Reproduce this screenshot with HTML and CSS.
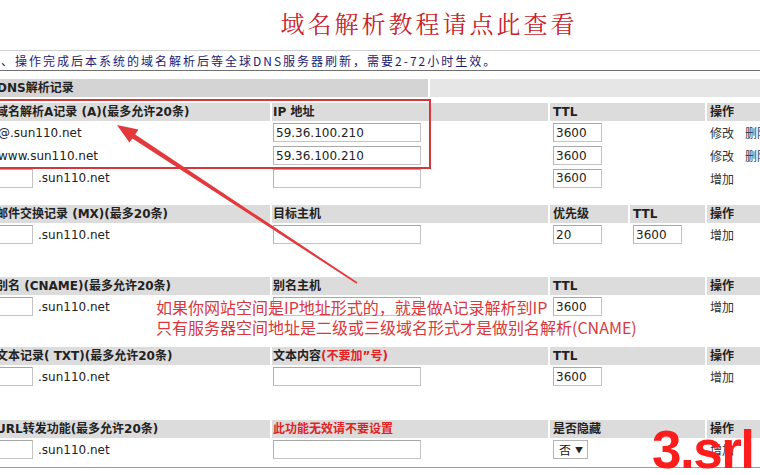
FILE: index.html
```html
<!DOCTYPE html>
<html lang="zh-CN">
<head>
<meta charset="utf-8">
<title>DNS解析记录</title>
<link rel="stylesheet" href="styles.css">
</head>
<body>
<div class="page">
  <h1 class="title">域名解析教程请点此查看</h1>
  <div class="notice">、操作完成后本系统的域名解析后等全球DNS服务器刷新，需要2-72小时生效。</div>
  <div class="dns-head"><div class="dns-l">DNS解析记录</div><div class="dns-r"></div></div>

  <table class="sec sec-a">
    <colgroup><col class="c1"><col class="c2"><col class="c3"><col class="c4"><col class="c5"></colgroup>
    <tr class="hd"><th>域名解析A记录 (A)(最多允许20条)</th><th>IP 地址</th><th colspan="2">TTL</th><th>操作</th></tr>
    <tr><td class="name">@.sun110.net</td><td><input class="inp ip" value="59.36.100.210"></td><td colspan="2"><input class="inp ttl" value="3600"></td><td class="op">修改<span class="del">删除</span></td></tr>
    <tr><td class="name">www.sun110.net</td><td><input class="inp ip" value="59.36.100.210"></td><td colspan="2"><input class="inp ttl" value="3600"></td><td class="op">修改<span class="del">删除</span></td></tr>
    <tr class="last"><td class="host"><input class="inp sm" value=""><span class="dom">.sun110.net</span></td><td><input class="inp ip" value=""></td><td colspan="2"><input class="inp ttl" value="3600"></td><td class="op">增加</td></tr>
  </table>

  <table class="sec sec-mx">
    <colgroup><col class="c1"><col class="c2"><col class="c3"><col class="c4"><col class="c5"></colgroup>
    <tr class="hd"><th>邮件交换记录 (MX)(最多20条)</th><th>目标主机</th><th>优先级</th><th>TTL</th><th>操作</th></tr>
    <tr><td class="host"><input class="inp sm" value=""><span class="dom">.sun110.net</span></td><td><input class="inp ip" value=""></td><td><input class="inp ttl" value="20"></td><td><input class="inp ttl" value="3600"></td><td class="op">增加</td></tr>
  </table>

  <table class="sec sec-cname">
    <colgroup><col class="c1"><col class="c2"><col class="c3"><col class="c4"><col class="c5"></colgroup>
    <tr class="hd"><th>别名 (CNAME)(最多允许20条)</th><th>别名主机</th><th colspan="2">TTL</th><th>操作</th></tr>
    <tr><td class="host"><input class="inp sm" value=""><span class="dom">.sun110.net</span></td><td><input class="inp ip" value=""></td><td colspan="2"><input class="inp ttl" value="3600"></td><td class="op">增加</td></tr>
  </table>

  <table class="sec sec-txt">
    <colgroup><col class="c1"><col class="c2"><col class="c3"><col class="c4"><col class="c5"></colgroup>
    <tr class="hd"><th>文本记录( TXT)(最多允许20条)</th><th>文本内容<span class="warn">(不要加”号)</span></th><th colspan="2">TTL</th><th>操作</th></tr>
    <tr><td class="host"><input class="inp sm" value=""><span class="dom">.sun110.net</span></td><td><input class="inp ip" value=""></td><td colspan="2"><input class="inp ttl" value="3600"></td><td class="op">增加</td></tr>
  </table>

  <table class="sec sec-url">
    <colgroup><col class="c1"><col class="c2"><col class="c3"><col class="c4"><col class="c5"></colgroup>
    <tr class="hd"><th>URL转发功能(最多允许20条)</th><th class="warn">此功能无效请不要设置</th><th colspan="2">是否隐藏</th><th>操作</th></tr>
    <tr><td class="host"><input class="inp sm" value=""><span class="dom">.sun110.net</span></td><td><input class="inp ip" value=""></td><td colspan="2"><span class="sel">否<i class="arr">▼</i></span></td><td class="op">增加</td></tr>
  </table>

  <div class="bottom-line"></div>

  <div class="redbox"></div>
  <svg class="arrow" width="760" height="475" viewBox="0 0 760 475">
    <polygon fill="#e3393c" points="117,125 138.5,129.6 135.2,134.6 357.4,282.3 356.6,283.7 132.4,138.4 129.4,142.6"/>
  </svg>
  <div class="note">如果你网站空间是IP地址形式的，就是做A记录解析到IP<br>只有服务器空间地址是二级或三级域名形式才是做别名解析(CNAME)</div>
  <div class="stamp">3.srl</div>
</div>
</body>
</html>
```

FILE: styles.css
```css
html, body {
  margin: 0;
  padding: 0;
  background: #fff;
}
body {
  width: 760px;
  height: 475px;
  overflow: hidden;
  font-family: "DejaVu Sans", "Noto Sans CJK SC", sans-serif;
  font-size: 12px;
  color: #222;
}
.page {
  position: relative;
  width: 760px;
  height: 475px;
}
.title {
  margin: 0;
  height: 50px;
  padding-left: 98px;
  box-sizing: border-box;
  text-align: center;
  font-family: "Noto Serif CJK SC", "Noto Sans CJK SC", serif;
  font-weight: normal;
  font-size: 24px;
  line-height: 46px;
  letter-spacing: 3px;
  color: #c8232b;
}
.notice {
  border-top: 1px solid #cfcfcf;
  border-bottom: 1px solid #707070;
  height: 19px;
  line-height: 19px;
  padding-left: 1px;
  font-family: "Noto Sans CJK SC", sans-serif;
  font-size: 12px;
  letter-spacing: 2px;
  color: #1c1c74;
  white-space: nowrap;
}
.dns-head {
  display: flex;
  gap: 2px;
  margin-top: 8px;
  margin-left: -10px;
  height: 18px;
}
.dns-l {
  width: 438px;
  background: #d4d4d4;
  font-weight: bold;
  line-height: 18px;
  padding-left: 7px;
  box-sizing: border-box;
  color: #222;
}
.dns-r {
  flex: 1;
  background: #e6e6e6;
}
.sec {
  table-layout: fixed;
  border-collapse: separate;
  border-spacing: 2px 0;
  width: 802px;
  margin-left: -10px;
}
.c1 { width: 278px; }
.c2 { width: 276px; }
.c3 { width: 78px; }
.c4 { width: 75px; }
.c5 { width: 83px; }
.sec-a { margin-top: 6px; }
.sec-mx { margin-top: 16px; }
.sec-cname { margin-top: 31px; }
.sec-txt { margin-top: 29px; }
.sec-url { margin-top: 32px; }
.sec th, .sec td {
  padding: 0 0 0 3px;
  white-space: nowrap;
  overflow: hidden;
  text-align: left;
  vertical-align: middle;
}
.sec th {
  height: 18px;
  line-height: 18px;
  background: #dcdcdc;
  font-weight: bold;
  color: #222;
}
.sec th:first-child { padding-left: 4px; }
.sec th:nth-child(2) { padding-left: 1px; }
.sec td { height: 23px; }
.sec tr.last td { height: 22px; }
.sec td:nth-child(2) { padding-left: 1px; }
.sec td.name {
  padding-left: 6px;
  font-size: 12px;
  color: #222;
}
.sec td.host { padding-left: 2px; }
.warn,
.sec th.warn { color: #e02424; }
.inp {
  box-sizing: border-box;
  height: 19px;
  border: 1px solid #c4c4c4;
  border-top-color: #a8a8a8;
  border-left-color: #b0b0b0;
  padding: 0 2px;
  margin: 0;
  font-family: "DejaVu Sans", sans-serif;
  font-size: 12px;
  color: #222;
  background: #fff;
  vertical-align: middle;
  outline: none;
}
.inp.ip { width: 148px; }
.inp.ttl { width: 49px; }
.inp.sm { width: 39px; }
.dom {
  margin-left: 5px;
  vertical-align: middle;
  color: #222;
}
.op {
  font-family: "Noto Sans CJK SC", sans-serif;
  color: #333;
}
.del { margin-left: 11px; }
.sel {
  display: inline-flex;
  align-items: center;
  box-sizing: border-box;
  width: 35px;
  height: 19px;
  border: 1px solid #b4b4b4;
  padding-left: 5px;
  font-family: "Noto Sans CJK SC", sans-serif;
  font-size: 12px;
  color: #222;
  vertical-align: middle;
}
.arr {
  font-style: normal;
  font-size: 8px;
  margin-left: 4px;
}
.bottom-line {
  margin-top: 6px;
  border-top: 1px solid #9a9a9a;
}
.redbox {
  position: absolute;
  left: -10px;
  top: 99px;
  width: 441px;
  height: 70px;
  box-sizing: border-box;
  border: 2px solid #d6363c;
}
.arrow {
  position: absolute;
  left: 0;
  top: 0;
  pointer-events: none;
}
.note {
  position: absolute;
  left: 156px;
  top: 297px;
  font-family: "Noto Sans CJK SC", sans-serif;
  font-size: 16px;
  line-height: 20px;
  color: #d8383e;
  white-space: nowrap;
}
.stamp {
  position: absolute;
  left: 652px;
  top: 423px;
  font-family: "Liberation Sans", sans-serif;
  font-weight: bold;
  font-size: 53px;
  line-height: 53px;
  letter-spacing: -1.5px;
  color: #ff1c1c;
}
```
